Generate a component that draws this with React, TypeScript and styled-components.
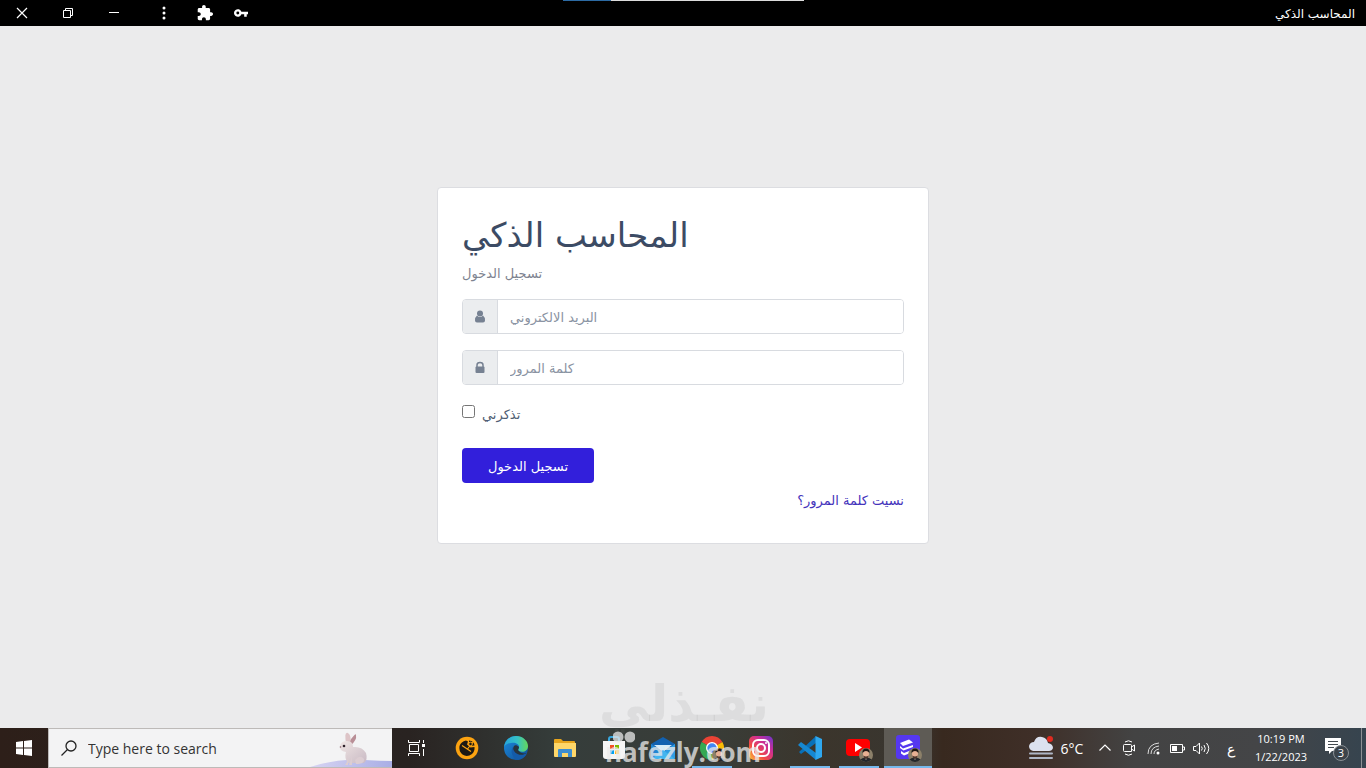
import React from "react";
import styled, { createGlobalStyle } from "styled-components";

const arabic = `"DejaVu Sans", "Noto Sans", sans-serif`;
const latin = `"Open Sans", "Noto Sans", sans-serif`;

const GlobalStyle = createGlobalStyle`
  *, *::before, *::after { box-sizing: border-box; }
  body { margin: 0; background: #ebebec; font: 13px/21px ${arabic}; color: #4f5d73; }
  button, input { font: inherit; color: inherit; margin: 0; }
  svg { display: block; }
`;

const Desktop = styled.div`
  position: relative;
  display: flex;
  flex-direction: column;
  min-height: 100vh;
`;

/* Title bar */
const TitleBar = styled.header`
  position: relative;
  display: flex;
  justify-content: space-between;
  align-items: center;
  height: 26px;
  padding-right: 11px;
  background: #000;
  color: #fff;
`;
const BarGroup = styled.div`
  display: flex;
  align-items: center;
`;
const BarButton = styled.button<{ $width: number }>`
  display: flex;
  align-items: center;
  justify-content: center;
  width: ${(p) => p.$width}px;
  height: 26px;
  padding: 0;
  border: 0;
  background: none;
  color: #fff;
`;
const WindowTitle = styled.span`
  padding-top: 2px;
  font-size: 12px;
  line-height: 24px;
`;
const ProgressStrip = styled.div`
  position: absolute;
  top: 0;
  left: 50%;
  width: 241px;
  height: 1px;
  margin-left: -120px;
  background: linear-gradient(to right, #2c6aa3 20%, #dcdcdc 20%);
`;

/* Login form */
const Main = styled.main`
  flex: 1;
  display: flex;
  align-items: center;
  justify-content: center;
  padding: 24px 16px 48px;
`;
const Card = styled.form`
  width: 100%;
  max-width: 492px;
  padding: 24px;
  background: #fff;
  border: 1px solid #dcdde1;
  border-radius: 4px;
`;
const Title = styled.h1`
  margin: 0 0 4px;
  font-size: 34px;
  line-height: 46px;
  font-weight: 400;
  color: #3c4b64;
`;
const Subtitle = styled.p`
  margin: 0 0 14px;
  line-height: 23px;
  color: #7d8390;
`;
const Field = styled.label`
  display: flex;
  height: 35px;
  margin-bottom: 16px;
  border: 1px solid #d8dbe0;
  border-radius: 4px;
  overflow: hidden;
`;
const FieldIcon = styled.span`
  display: flex;
  align-items: center;
  justify-content: center;
  width: 35px;
  background: #ebedef;
  border-right: 1px solid #d8dbe0;
  color: #768192;
`;
const FieldInput = styled.input`
  flex: 1;
  min-width: 0;
  padding: 2px 12px 0;
  border: 0;
  outline: 0;
  background: #fff;
  &::placeholder { color: #8a93a2; opacity: 1; }
`;
const Remember = styled.label`
  display: flex;
  gap: 7px;
  margin: 19px 0 23px;
  input { width: 13px; height: 13px; margin-top: 1px; }
`;
const Submit = styled.button`
  display: block;
  width: 132px;
  height: 35px;
  padding: 2px 0 0;
  border: 0;
  border-radius: 4px;
  background: #321fdb;
  color: #fff;
`;
const Forgot = styled.a`
  display: block;
  width: fit-content;
  margin-left: auto;
  line-height: 36px;
  color: #4433bb;
  text-decoration: none;
`;

/* Taskbar */
const Taskbar = styled.footer`
  display: flex;
  justify-content: space-between;
  height: 40px;
  background: linear-gradient(to right, #2d1f19 0%, #292321 30%, #353d3b 41%, #393d38 52%, #3b352c 60%, #393630 67%, #38291f 69%, #3f2f28 76%, #434343 83%, #444547 92%, #36444f 100%);
  color: #fff;
  font-family: ${latin};
  font-size: 14px;
`;
const TaskGroup = styled.div`
  display: flex;
`;
const StartButton = styled.button`
  display: grid;
  place-items: center;
  width: 48px;
  padding: 0;
  border: 0;
  background: none;
`;
const SearchBox = styled.label`
  display: flex;
  align-items: center;
  width: 344px;
  padding-left: 12px;
  background: #f3f3f4;
  border: 1px solid #bdbab8;
  border-right: 0;
  color: #222;
`;
const SearchInput = styled.input`
  flex: 1;
  min-width: 0;
  padding: 0 0 0 11px;
  border: 0;
  outline: 0;
  background: none;
  &::placeholder { color: #333; opacity: 1; }
`;
const AppList = styled.div`
  display: flex;
  gap: 1px;
  margin-left: 3px;
`;
const AppButton = styled.button<{ $running?: boolean; $active?: boolean }>`
  position: relative;
  display: grid;
  place-items: center;
  width: 48px;
  padding: 0;
  border: 0;
  background: ${(p) => (p.$active ? "#5e5b55" : "none")};
  &::after {
    content: "";
    position: absolute;
    bottom: 0;
    left: ${(p) => (p.$active ? 0 : 4)}px;
    right: ${(p) => (p.$active ? 0 : 4)}px;
    height: 2px;
    background: ${(p) => (p.$running || p.$active ? "#76b9ed" : "none")};
  }
`;
const Tray = styled.div`
  display: flex;
  align-items: center;
`;
const TrayButton = styled.button<{ $width: number }>`
  display: flex;
  align-items: center;
  justify-content: center;
  gap: 8px;
  width: ${(p) => p.$width}px;
  height: 40px;
  padding: 0;
  border: 0;
  background: none;
  color: #fff;
`;
const Clock = styled.div`
  width: 70px;
  text-align: center;
  font-size: 11px;
  line-height: 18px;
`;
const Notifications = styled(TrayButton)`
  justify-content: flex-start;
  padding-left: 8px;
`;
const ShowDesktop = styled.div`
  width: 5px;
  height: 40px;
  border-left: 1px solid #8c9094;
`;

/* Site watermark laid over the bottom of the screen */
const Watermark = styled.div`
  position: absolute;
  bottom: 0;
  left: 50%;
  width: 168px;
  margin-left: -84px;
  text-align: center;
  pointer-events: none;
`;
const WatermarkArabic = styled.div`
  font-size: 50px;
  font-weight: 700;
  line-height: 48px;
  color: rgba(120, 120, 125, 0.12);
`;
const WatermarkLatin = styled.div`
  padding-top: 8px;
  font: 700 26px/32px ${latin};
  color: rgba(235, 235, 235, 0.75);
`;
const WatermarkDots = styled.svg`
  position: absolute;
  left: 14px;
  bottom: 24px;
`;

const Avatar = () => (
  <g>
    <circle cx="20" cy="20" r="7" fill="#8c8069" />
    <path d="M14.500 24.500Q17 22 20 23Q23 22 25.500 24.500Q20 29.500 14.500 24.500Z" fill="#24272b" />
    <path d="M18.500 22H21.500L20 25Z" fill="#e9e2dc" />
    <ellipse cx="20" cy="19" rx="3" ry="4" fill="#e8b193" />
    <path d="M16.500 18Q16 13.500 20 13.500Q24 13.500 23.500 18Q22 16 20 16Q18 16 16.500 18Z" fill="#201916" />
    <path d="M17.300 20.500Q18 24 20 24Q22 24 22.700 20.500Q20 22.500 17.300 20.500Z" fill="#4a342b" />
  </g>
);

const Rabbit = () => (
  <svg width="82" height="38" viewBox="0 0 82 38">
    <defs>
      <linearGradient id="hill" x1="0" x2="1"><stop stopColor="#d7d4f2" /><stop offset="1" stopColor="#a9aee5" /></linearGradient>
      <linearGradient id="fur" x1="0" y1="0" x2="1" y2="1"><stop stopColor="#f0e6e4" /><stop offset="1" stopColor="#c9bac4" /></linearGradient>
    </defs>
    <path d="M0 38Q28 29 55 31Q70 32 82 32V38Z" fill="url(#hill)" />
    <path d="M39 13Q46 3 46 6Q47 11 41 16Z" fill="#b98f97" />
    <path d="M36 14Q34 2 38 4Q42 7 40 15Z" fill="#ddc4c7" />
    <path d="M30 17Q31 12 37 12Q43 12 43 18Q52 17 56 24Q58 31 54 34H38Q34 29 36 23Q29 22 30 17Z" fill="url(#fur)" />
    <path d="M38 26V36H35Q38 32 37 28M42 27V36H39M45 31Q50 25 54 30Q55 35 46 35Z" fill="#dccdd2" />
    <circle cx="34" cy="17" r="1.300" fill="#30242c" />
    <circle cx="30.500" cy="18" r=".8" fill="#8a6670" />
  </svg>
);

const EdgeIcon = () => (
  <svg width="24" height="24" viewBox="0 0 24 24">
    <defs>
      <linearGradient id="edgeTop" x1="0" x2="1"><stop stopColor="#26a4dc" /><stop offset=".55" stopColor="#35c1c6" /><stop offset="1" stopColor="#65d65a" /></linearGradient>
      <linearGradient id="edgeLow" x1="0" x2="1" y2="1"><stop stopColor="#1b8de0" /><stop offset="1" stopColor="#114b91" /></linearGradient>
    </defs>
    <circle cx="12" cy="12" r="12" fill="url(#edgeLow)" />
    <path d="M0 11C1 4 6 0 12 0C19 0 24 5 24 10C24 15 19 17 15 15C13 14 15 13 15 11C15 8 11 6 7 7C4 7 1 9 0 11Z" fill="url(#edgeTop)" />
    <path d="M10 10C8 13 9 18 13 20C17 21 20 19 23 17C20 18 16 17 15 15C13 14 15 13 15 11C13 9 11 9 10 10Z" fill="#27343e" />
    <path d="M9 11C6 15 8 22 14 24C19 23 22 20 23 17C17 21 9 18 9 11Z" fill="#145ba9" />
  </svg>
);

const apps: { name: string; running?: boolean; active?: boolean; icon: React.ReactNode }[] = [
  {
    name: "Editor",
    icon: (
      <svg width="24" height="24" viewBox="0 0 24 24">
        <circle cx="12" cy="12" r="11.300" fill="#fca311" />
        <path d="M4.500 10Q6 5.500 11 4.500L13 5.500L12 8.500L15.500 11.500L19.500 11Q20 15 17 18Q12 21.500 7.500 18.500Q3.500 15 4.500 10Z" fill="#1d1914" />
        <path d="M14 4.500Q19 5 19.500 9.500L16.500 9.800L14 8Z" fill="#1d1914" />
        <path d="M7 9.500L16 15.500M12.500 13L18 6" fill="none" stroke="#fca311" strokeWidth="1.200" />
        <circle cx="15.500" cy="8" r="1.800" fill="#1d1914" stroke="#fca311" />
      </svg>
    ),
  },
  { name: "Edge", icon: <EdgeIcon /> },
  {
    name: "File Explorer",
    icon: (
      <svg width="22" height="20" viewBox="0 0 22 20">
        <path d="M0 2Q0 1 1 1H7L9 3H20Q21 3 21 4V8H0Z" fill="#e8a51c" />
        <path d="M0 5H22V18Q22 19 21 19H1Q0 19 0 18Z" fill="#ffd769" />
        <path d="M4 12Q4 11 5 11H17Q18 11 18 12V19H14V15H8V19H4Z" fill="#3e8ed0" />
      </svg>
    ),
  },
  {
    name: "Microsoft Store",
    icon: (
      <svg width="24" height="24" viewBox="0 0 24 24">
        <path d="M7 7V3Q7 1 9 1H15Q17 1 17 3V7" fill="none" stroke="#39a8df" strokeWidth="2" />
        <path d="M1 5H23V20Q23 23 20 23H4Q1 23 1 20Z" fill="#f5f5f5" />
        <path d="M8 9H12V13H8Z" fill="#f25022" /><path d="M13 9H17V13H13Z" fill="#7fba00" />
        <path d="M8 14H12V18H8Z" fill="#00a4ef" /><path d="M13 14H17V18H13Z" fill="#ffb900" />
      </svg>
    ),
  },
  {
    name: "Mail",
    icon: (
      <svg width="24" height="24" viewBox="0 0 24 24">
        <path d="M0 8L12 1L24 8V22H0Z" fill="#1261b0" />
        <path d="M3 9H21L12 16Z" fill="#d6ebf8" />
        <path d="M0 8L12 16L0 23Z" fill="#2385d1" /><path d="M24 8L12 16L24 23Z" fill="#2f9de4" />
        <path d="M0 23L12 14L24 23Z" fill="#42b5ef" />
      </svg>
    ),
  },
  {
    name: "Chrome",
    running: true,
    icon: (
      <svg width="28" height="28" viewBox="-2 -2 28 28">
        <path d="M12 12L1.600 6A12 12 0 0 1 22.400 6Z" fill="#ea4335" />
        <path d="M12 12L22.400 6A12 12 0 0 1 12 24Z" fill="#fbbc05" />
        <path d="M12 12V24A12 12 0 0 1 1.600 6Z" fill="#34a853" />
        <circle cx="12" cy="12" r="6" fill="#fff" /><circle cx="12" cy="12" r="4.700" fill="#4285f4" />
        <g transform="translate(-1 -1)"><Avatar /></g>
      </svg>
    ),
  },
  {
    name: "Instagram",
    icon: (
      <svg width="24" height="24" viewBox="0 0 24 24">
        <defs>
          <linearGradient id="insta" x1="0" y1="1" x2="1" y2="0"><stop stopColor="#ffc13b" /><stop offset=".35" stopColor="#f04b45" /><stop offset=".65" stopColor="#cf2e92" /><stop offset="1" stopColor="#6a35d0" /></linearGradient>
        </defs>
        <rect width="24" height="24" rx="5" fill="url(#insta)" />
        <rect x="4" y="4" width="16" height="16" rx="5" fill="none" stroke="#fff" strokeWidth="2" />
        <circle cx="12" cy="12" r="4" fill="none" stroke="#fff" strokeWidth="2" /><circle cx="17" cy="7" r="1" fill="#fff" />
      </svg>
    ),
  },
  {
    name: "Visual Studio Code",
    running: true,
    icon: (
      <svg width="24" height="24" viewBox="0 0 24 24">
        <path d="M1 16L18 0V7L3 18Z" fill="#0870b8" /><path d="M1 8L3 6L18 17V24L0 9Z" fill="#1688d2" />
        <path d="M17.500 0L24 3V21L17.500 24Z" fill="#2fa8ef" />
      </svg>
    ),
  },
  {
    name: "YouTube",
    running: true,
    icon: (
      <svg width="30" height="30" viewBox="-2 -2 30 30">
        <rect x="0" y="4" width="24" height="17" rx="4" fill="#f00" />
        <path d="M9 8L16 12.500L9 17Z" fill="#fff" /><Avatar />
      </svg>
    ),
  },
  {
    name: "المحاسب الذكي",
    active: true,
    icon: (
      <svg width="30" height="30" viewBox="-2 -2 30 30">
        <rect x="1" y="0" width="24" height="24" rx="3" fill="#5537f0" />
        <g fill="#fff">
          <path d="M5 8L14 4.500L18 7.500L8 11Z" />
          <path d="M5 11L8 13.500L18 10V12L8.500 15.500L5 13Z" />
          <path d="M6 16L9 18L18 14.500V17L9 20.500L6 18.500Z" />
        </g>
        <Avatar />
      </svg>
    ),
  },
];

export default function App() {
  return (
    <Desktop>
      <GlobalStyle />
      <TitleBar>
        <BarGroup>
          <BarButton $width={44} aria-label="Close">
            <svg width="12" height="12" viewBox="0 0 12 12"><path d="M1 1L11 11M11 1L1 11" stroke="currentColor" strokeWidth="1.200" /></svg>
          </BarButton>
          <BarButton $width={48} aria-label="Restore">
            <svg width="10" height="10" viewBox="0 0 10 10"><path d="M.5 2.500H7.500V9.500H.5ZM2.500 2V.5H9.500V7.500H8" fill="none" stroke="currentColor" /></svg>
          </BarButton>
          <BarButton $width={44} aria-label="Minimize">
            <svg width="10" height="2" viewBox="0 0 10 2"><path d="M0 .5H10" stroke="currentColor" /></svg>
          </BarButton>
          <BarButton $width={56} aria-label="Menu">
            <svg width="4" height="14" viewBox="0 0 4 14" fill="currentColor"><circle cx="2" cy="2" r="1.500" /><circle cx="2" cy="7" r="1.500" /><circle cx="2" cy="12" r="1.500" /></svg>
          </BarButton>
          <BarButton $width={26} aria-label="Extensions">
            <svg width="16" height="16" viewBox="1 1 22 22" fill="currentColor"><path d="M20.5 11H19V7c0-1.100-.9-2-2-2h-4V3.500C13 2.120 11.880 1 10.500 1S8 2.120 8 3.500V5H4c-1.100 0-2 .9-2 2v3.800h1.500c1.500 0 2.700 1.200 2.700 2.700S5 16.200 3.500 16.200H2V20c0 1.100.9 2 2 2h3.800v-1.500c0-1.500 1.200-2.700 2.700-2.700s2.700 1.200 2.700 2.700V22H17c1.100 0 2-.9 2-2v-4h1.500c1.380 0 2.500-1.120 2.500-2.500S21.880 11 20.500 11z" /></svg>
          </BarButton>
          <BarButton $width={46} aria-label="Passwords">
            <svg width="14" height="8" viewBox="1 6 22 12" fill="currentColor"><path fillRule="evenodd" d="M12.650 10A6 6 0 1 0 12.650 14H17v4h4v-4h2v-4zM7 14.300A2.300 2.300 0 1 1 7 9.700A2.300 2.300 0 0 1 7 14.300z" /></svg>
          </BarButton>
        </BarGroup>
        <ProgressStrip />
        <WindowTitle dir="rtl">المحاسب الذكي</WindowTitle>
      </TitleBar>

      <Main>
        <Card onSubmit={(e) => e.preventDefault()}>
          <Title>المحاسب الذكي</Title>
          <Subtitle>تسجيل الدخول</Subtitle>
          <Field>
            <FieldIcon>
              <svg width="10" height="13" viewBox="0 0 10 13" fill="currentColor"><circle cx="5" cy="3.500" r="3" /><path d="M2 5.500Q5 8.500 8 5.500Q10 7 10 10.500Q10 12.500 8 12.500H2Q0 12.500 0 10.500Q0 7 2 5.500Z" /></svg>
            </FieldIcon>
            <FieldInput type="text" placeholder="البريد الالكتروني" aria-label="البريد الالكتروني" />
          </Field>
          <Field>
            <FieldIcon>
              <svg width="10" height="13" viewBox="0 0 10 13" fill="currentColor"><path d="M2 6V4Q2 1.500 5 1.500Q8 1.500 8 4V6" fill="none" stroke="currentColor" strokeWidth="1.500" /><rect x=".5" y="5.500" width="9" height="6.500" rx="1" /></svg>
            </FieldIcon>
            <FieldInput type="password" placeholder="كلمة المرور" aria-label="كلمة المرور" />
          </Field>
          <Remember><input type="checkbox" />تذكرني</Remember>
          <Submit type="submit">تسجيل الدخول</Submit>
          <Forgot href="#forgot" dir="rtl">نسيت كلمة المرور؟</Forgot>
        </Card>
      </Main>

      <Taskbar>
        <TaskGroup>
          <StartButton aria-label="Start">
            <svg width="16" height="16" viewBox="0 0 16 16" fill="#fff"><path d="M0 2L7 1V7.500H0ZM8 1L16 0V7.500H8ZM0 8.500H7V15L0 14ZM8 8.500H16V16L8 15Z" /></svg>
          </StartButton>
          <SearchBox>
            <svg width="16" height="16" viewBox="0 0 16 16" fill="none" stroke="#222" strokeWidth="1.300"><circle cx="10" cy="6" r="5" /><path d="M6.500 9.500L.5 15.500" /></svg>
            <SearchInput placeholder="Type here to search" aria-label="Type here to search" />
            <Rabbit />
          </SearchBox>
          <StartButton aria-label="Task View">
            <svg width="17" height="16" viewBox="0 0 17 16" fill="none" stroke="#fff"><path d="M.5 0V2.500H11.500V0M.5 16V13.500H11.500V16M1.500 4.500H10.500V11.500H1.500ZM15.500 0V3M15.500 9V16" /><path d="M14 4H17V7H14Z" fill="#fff" stroke="none" /></svg>
          </StartButton>
          <AppList>
            {apps.map((app) => (
              <AppButton key={app.name} aria-label={app.name} $running={app.running} $active={app.active}>{app.icon}</AppButton>
            ))}
          </AppList>
        </TaskGroup>
        <Tray>
          <TrayButton $width={70}>
            <svg width="24" height="24" viewBox="0 0 24 24"><path d="M4 15Q0 14 0 10Q1 6 5 6Q7 0 13 1Q18 2 19 7Q24 8 24 12Q23 15 20 15Z" fill="#dce1ef" /><path d="M1 17.500H23M1 22H23" stroke="#aeb6c6" strokeWidth="2" strokeLinecap="round" /><circle cx="21" cy="3" r="3" fill="#e02b20" /></svg>
            6°C
          </TrayButton>
          <TrayButton $width={28} aria-label="Show hidden icons">
            <svg width="12" height="8" viewBox="0 0 12 8" fill="none" stroke="#fff" strokeWidth="1.200"><path d="M.5 6.500L6 1L11.500 6.500" /></svg>
          </TrayButton>
          <TrayButton $width={20} aria-label="Meet Now">
            <svg width="12" height="16" viewBox="0 0 12 16" fill="none" stroke="#fff"><path d="M2 2Q5.500 -.5 9 2M2 14Q5.500 16.500 9 14M.5 5.500Q.5 4.500 1.500 4.500H7.500Q8.500 4.500 8.500 5.500V11.500H1.500Q.5 11.500 .5 10.500ZM8.500 7L11.500 5V11L8.500 9" /></svg>
          </TrayButton>
          <TrayButton $width={28} aria-label="Network">
            <svg width="13" height="13" viewBox="0 0 13 13" fill="none" stroke="#ddd"><path d="M1 12Q1 2 12 1M4 12Q4 5 12 4M7 12Q7 8 12 7" /><circle cx="11" cy="11" r="1.500" fill="#fff" stroke="none" /></svg>
          </TrayButton>
          <TrayButton $width={20} aria-label="Battery">
            <svg width="15" height="9" viewBox="0 0 15 9"><path d="M.5.5H12.500V8.500H.5ZM13 3H14.500V6H13" fill="none" stroke="#fff" /><path d="M2 2H7V7H2Z" fill="#fff" /></svg>
          </TrayButton>
          <TrayButton $width={28} aria-label="Volume">
            <svg width="17" height="13" viewBox="0 0 17 13" fill="none" stroke="#fff"><path d="M.5 4.500H3L6.500 1V12L3 8.500H.5ZM8.500 4.500Q10 6.500 8.500 8.500M11 3Q13.500 6.500 11 10M13.500 1Q18 6.500 13.500 12" /></svg>
          </TrayButton>
          <TrayButton $width={31}>ع</TrayButton>
          <Clock>10:19 PM<br />1/22/2023</Clock>
          <Notifications $width={45} aria-label="3 notifications">
            <svg width="26" height="26" viewBox="0 0 26 26">
              <path d="M1 3H17V16H8L5 19V16H1Z" fill="#fff" /><path d="M4 6.500H14M4 9.500H14M4 12.500H10" stroke="#444b50" />
              <circle cx="17" cy="18" r="7.500" fill="#3b434a" stroke="#8a9095" />
              <text x="17" y="22" textAnchor="middle" fontSize="11" fill="#fff">3</text>
            </svg>
          </Notifications>
          <ShowDesktop />
        </Tray>
      </Taskbar>

      <Watermark>
        <WatermarkArabic>نفـذلي</WatermarkArabic>
        <WatermarkDots width="22" height="14" viewBox="0 0 22 14" fill="#e8e8e8" fillOpacity=".75"><circle cx="5" cy="7" r="5.500" /><circle cx="17" cy="7" r="5.500" /></WatermarkDots>
        <WatermarkLatin>nafezly.com</WatermarkLatin>
      </Watermark>
    </Desktop>
  );
}
